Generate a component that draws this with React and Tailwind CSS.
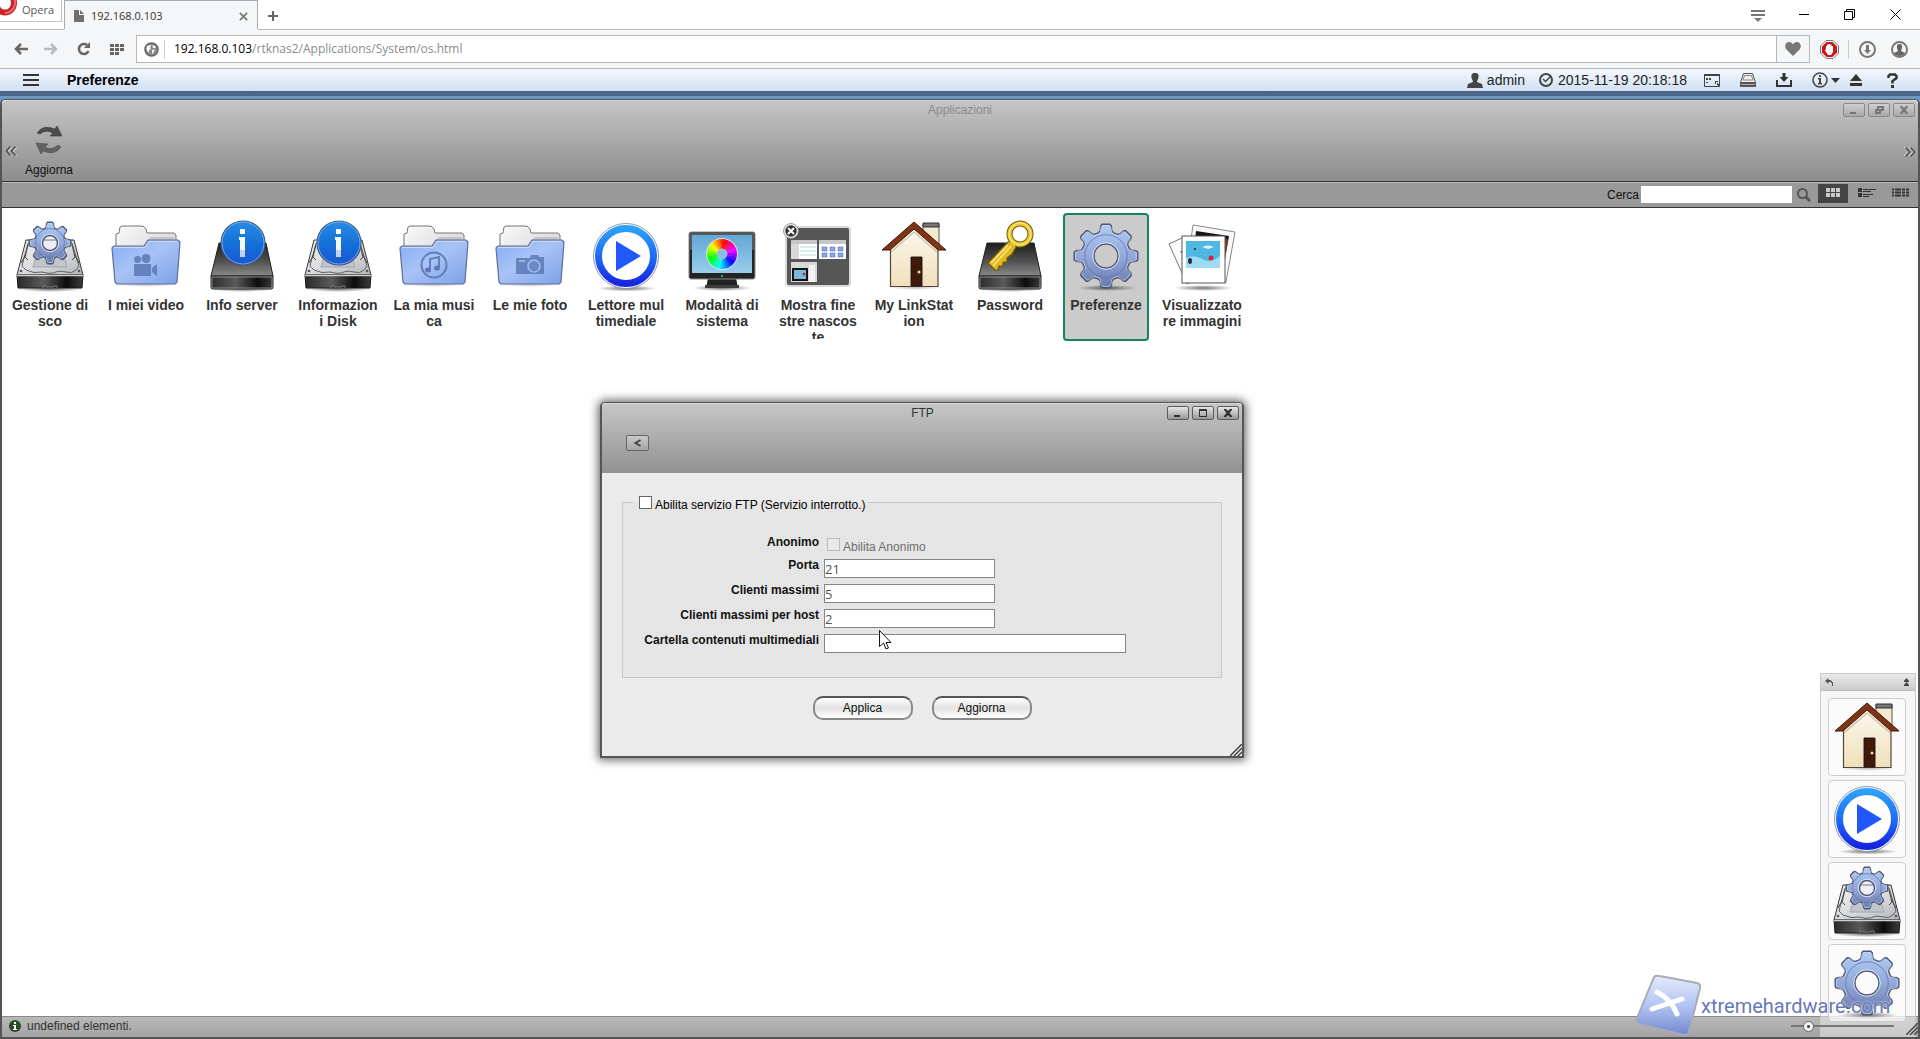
// Desktop view of the NAS web manager, shown inside a browser window

import React, { useState } from 'react';

/* ---------- shape helpers ---------- */

// Outline of a cog with eight teeth
const gearPath = (cx, cy, outer, root) => {
  const points = [];
  const add = (r, deg) => {
    const a = (deg * Math.PI) / 180;
    points.push(`${(cx + r * Math.cos(a)).toFixed(1)} ${(cy + r * Math.sin(a)).toFixed(1)}`);
  };
  for (let i = 0; i < 8; i++) {
    const base = i * 45;
    add(root, base - 17);
    add(root + 1.5, base - 13);
    add(outer - 1.5, base - 10);
    add(outer, base - 7);
    add(outer, base + 7);
    add(outer - 1.5, base + 10);
    add(root + 1.5, base + 13);
    add(root, base + 17);
  }
  return `M${points.join('L')}Z`;
};

const circlePath = (cx, cy, r) => `M${cx - r} ${cy}a${r} ${r} 0 1 0 ${2 * r} 0a${r} ${r} 0 1 0 ${-2 * r} 0Z`;

// One wedge of the colour wheel
const wedgePath = (cx, cy, r, from, to) => {
  const rad = (d) => (d * Math.PI) / 180;
  return `M${cx} ${cy}L${cx + r * Math.cos(rad(from))} ${cy + r * Math.sin(rad(from))}A${r} ${r} 0 0 1 ${cx + r * Math.cos(rad(to))} ${cy + r * Math.sin(rad(to))}Z`;
};

// Gradients shared by all application icons
const Gradients = () => (
  <svg width="0" height="0" className="absolute" aria-hidden="true">
    <defs>
      <linearGradient id="gear" x1="0" y1="0" x2="0" y2="1">
        <stop offset="0" stopColor="#b0cdf7" />
        <stop offset="0.5" stopColor="#94a9d9" />
        <stop offset="1" stopColor="#6878ab" />
      </linearGradient>
      <linearGradient id="folder" x1="0" y1="0" x2="1" y2="1">
        <stop offset="0" stopColor="#86abef" />
        <stop offset="0.45" stopColor="#a9c3f6" />
        <stop offset="1" stopColor="#7c9fe8" />
      </linearGradient>
      <linearGradient id="paper" x1="0" y1="0" x2="1" y2="1">
        <stop offset="0" stopColor="#fafafa" />
        <stop offset="1" stopColor="#c8c8c8" />
      </linearGradient>
      <linearGradient id="silver" x1="0" y1="0" x2="1" y2="1">
        <stop offset="0" stopColor="#f4f4f4" />
        <stop offset="0.6" stopColor="#d4d5d8" />
        <stop offset="1" stopColor="#b5b6ba" />
      </linearGradient>
      <linearGradient id="front" x1="0" y1="0" x2="1" y2="0">
        <stop offset="0" stopColor="#2a2a2a" />
        <stop offset="0.4" stopColor="#5a5a5a" />
        <stop offset="0.75" stopColor="#0c0c0c" />
        <stop offset="1" stopColor="#3c3c3c" />
      </linearGradient>
      <linearGradient id="black" x1="0" y1="0" x2="0" y2="1">
        <stop offset="0" stopColor="#1d1d1d" />
        <stop offset="0.55" stopColor="#515151" />
        <stop offset="1" stopColor="#8a8a8a" />
      </linearGradient>
      <linearGradient id="badge" x1="0" y1="0" x2="0" y2="1">
        <stop offset="0" stopColor="#2a8ce6" />
        <stop offset="0.5" stopColor="#1272d8" />
        <stop offset="1" stopColor="#1d55d3" />
      </linearGradient>
      <linearGradient id="ring" x1="0" y1="0" x2="0" y2="1">
        <stop offset="0" stopColor="#2ba0fb" />
        <stop offset="0.5" stopColor="#1f6cf7" />
        <stop offset="1" stopColor="#1525e0" />
      </linearGradient>
      <linearGradient id="wall" x1="0" y1="0" x2="0" y2="1">
        <stop offset="0" stopColor="#fdf9f0" />
        <stop offset="1" stopColor="#f0dfb9" />
      </linearGradient>
      <linearGradient id="screen" x1="0" y1="0" x2="0" y2="1">
        <stop offset="0" stopColor="#62a8d6" />
        <stop offset="1" stopColor="#9acdeb" />
      </linearGradient>
      <linearGradient id="logo" x1="0" y1="0" x2="0" y2="1">
        <stop offset="0" stopColor="#e4ebfa" />
        <stop offset="0.5" stopColor="#b3c4f5" />
        <stop offset="1" stopColor="#7288cd" />
      </linearGradient>
      <radialGradient id="shade">
        <stop offset="0" stopColor="#000" stopOpacity="0.55" />
        <stop offset="1" stopColor="#000" stopOpacity="0" />
      </radialGradient>
    </defs>
  </svg>
);

/* ---------- application icons, drawn on a 72 x 72 board ---------- */

const Board = ({ children }) => (
  <svg viewBox="0 0 72 72" className="block size-[72px] shrink-0" aria-hidden="true">{children}</svg>
);

const Gear = ({ cx, cy, outer, root, hole }) => (
  <g>
    <path d={gearPath(cx, cy, outer, root) + circlePath(cx, cy, hole)} fill="url(#gear)" fillRule="evenodd" stroke="#4d5670" strokeWidth="1.4" strokeLinejoin="round" />
    <path d={gearPath(cx, cy, outer - 1.5, root - 1.3)} fill="none" stroke="#c9dcfa" strokeWidth="0.8" opacity="0.8" />
    <circle cx={cx} cy={cy} r={hole + 1.3} fill="none" stroke="#d5e2fa" strokeWidth="1" />
    <circle cx={cx} cy={cy} r={(root + hole) / 2 + 3} fill="none" stroke="#6377ad" strokeWidth="0.8" />
  </g>
);

const SilverDisk = () => (
  <g>
    <ellipse cx="36" cy="69" rx="34" ry="3" fill="url(#shade)" />
    <path d="M12 20H60L69 55H3Z" fill="url(#silver)" stroke="#333" strokeWidth="1" strokeLinejoin="round" />
    <path d="M14 23H58L65 46L62 50Q58 54 52 52Q44 50 40 53Q34 54 28 52Q20 54 12 50L8 46Z" fill="none" stroke="#5d6066" strokeWidth="1" />
    <path d="M12 34l-5 9M60 34l5 9M14 25l-3 12 3 3M58 25l3 12-3 3" fill="none" stroke="#444" strokeWidth="1" />
    <path d="M23 33L19 47H53L49 33Z" fill="#c2c5cb" stroke="#999ca3" strokeWidth="0.8" />
    <path d="M3 55H69L68 68H4Z" fill="url(#front)" stroke="#1a1a1a" strokeWidth="1" strokeLinejoin="round" />
    <path d="M3 55.5H69" stroke="#cfcfcf" strokeWidth="1.5" />
    <circle cx="7" cy="51" r="1.3" fill="#555" />
    <circle cx="65" cy="51" r="1.3" fill="#555" />
    <path d="M29 68v-2h3v1h8v-1h3v2" fill="none" stroke="#777" />
  </g>
);

const BlackDisk = () => (
  <g>
    <ellipse cx="36" cy="69" rx="33" ry="3" fill="url(#shade)" />
    <path d="M13 23H60L67 56H5Z" fill="url(#black)" stroke="#222" strokeWidth="1" strokeLinejoin="round" />
    <path d="M5 56H67V67Q67 69 65 69H7Q5 69 5 67Z" fill="url(#front)" stroke="#222" strokeWidth="1" />
    <path d="M6 57H66V68H6Z" fill="none" stroke="#8b8b8b" strokeWidth="1" />
  </g>
);

const InfoBadge = () => (
  <g>
    <circle cx="37" cy="23" r="22" fill="url(#badge)" stroke="#3d5673" strokeWidth="1.2" />
    <circle cx="37" cy="23" r="21" fill="none" stroke="#7fb8ee" strokeWidth="0.8" />
    <path d="M34 9H39V14H34ZM33 17H39V37H34V20H33Z" fill="#f4f7fc" />
    <path d="M34 30H39V37H34Z" fill="#c4d2ee" />
  </g>
);

const DiskManagerIcon = () => (
  <Board>
    <SilverDisk />
    <circle cx="36" cy="23" r="8" fill="#eeeff2" />
    <path d="M30 20H42" stroke="#777" />
    <Gear cx={36} cy={23} outer={21} root={15.5} hole={7.5} />
  </Board>
);

const ServerInfoIcon = () => (
  <Board>
    <BlackDisk />
    <InfoBadge />
  </Board>
);

const DiskInfoIcon = () => (
  <Board>
    <SilverDisk />
    <InfoBadge />
  </Board>
);

const Folder = ({ children }) => (
  <Board>
    <ellipse cx="36" cy="64" rx="34" ry="3" fill="url(#shade)" opacity="0.5" />
    <path d="M6 60V14L9 13L10 7L12 6H33L36 9L37 13H64L66 15V60Z" fill="url(#paper)" stroke="#777" strokeWidth="1" strokeLinejoin="round" />
    <path d="M40 17H64V24H37Z" fill="#b9b9b9" opacity="0.7" />
    <path d="M2 28L4 26H34L38 20H68L70 22L67 62L65 64H7L5 62Z" fill="url(#folder)" stroke="#5d6f95" strokeWidth="1.2" strokeLinejoin="round" />
    <path d="M3.5 28L5 27.5H35L39 21.5H67" fill="none" stroke="#c9daf9" strokeWidth="1" />
    {children}
  </Board>
);

const VideoFolderIcon = () => (
  <Folder>
    <g fill="#5d78b4" opacity="0.85">
      <circle cx="27.5" cy="39.5" r="3.5" />
      <circle cx="36" cy="38.5" r="4.5" />
      <path d="M24 44H41V56H24ZM42 48L47 44V56L42 52Z" />
    </g>
  </Folder>
);

const MusicFolderIcon = () => (
  <Folder>
    <g fill="none" stroke="#5d78b4" strokeWidth="2" opacity="0.9">
      <circle cx="36" cy="45" r="12.5" />
      <path d="M32 49V39L41 37V47" />
    </g>
    <ellipse cx="30" cy="50" rx="3" ry="2.5" fill="#5d78b4" />
    <ellipse cx="39" cy="48" rx="3" ry="2.5" fill="#5d78b4" />
  </Folder>
);

const PhotoFolderIcon = () => (
  <Folder>
    <path d="M22 38H36L37 35H44L45 37H50V54H22Z" fill="#5d78b4" opacity="0.85" />
    <circle cx="40" cy="46" r="6" fill="#6d8ac8" stroke="#a4bdf0" strokeWidth="1.6" />
    <path d="M25 41H31" stroke="#a4bdf0" strokeWidth="1.6" />
  </Folder>
);

const PlayerIcon = () => (
  <Board>
    <ellipse cx="37" cy="68.5" rx="30" ry="3" fill="url(#shade)" />
    <circle cx="36" cy="36" r="32.5" fill="#fff" stroke="#8b97ab" strokeWidth="1" />
    <circle cx="36" cy="36" r="27.5" fill="#fff" stroke="url(#ring)" strokeWidth="7" />
    <path d="M26 21V51L51 36Z" fill="#2258fb" />
  </Board>
);

const MonitorIcon = () => (
  <Board>
    <ellipse cx="36" cy="68" rx="30" ry="3" fill="url(#shade)" />
    <path d="M22 58H50L52 68H20Z" fill="#222" />
    <path d="M19 65H53V68H19Z" fill="#3b3b3b" />
    <rect x="3" y="12" width="66" height="47" rx="2" fill="#242424" stroke="#8a8a8a" strokeWidth="1" />
    <path d="M4 13H68V30H4Z" fill="#8c8c8c" opacity="0.5" />
    <rect x="6" y="15" width="60" height="38" fill="url(#screen)" />
    <circle cx="36" cy="34" r="16" fill="#e8f0f4" opacity="0.8" />
    {Array.from({ length: 36 }, (_, i) => (
      <path key={i} d={wedgePath(36, 34, 15, i * 10, i * 10 + 11)} fill={`hsl(${(635 - i * 10) % 360} 100% 50%)`} />
    ))}
    <circle cx="36" cy="34" r="5" fill="#86bde0" stroke="#b4c7d2" />
    <circle cx="36" cy="56" r="1" fill="#31d583" />
  </Board>
);

const HiddenWindowsIcon = () => (
  <Board>
    <rect x="4" y="7" width="64" height="59" rx="3" fill="#565656" stroke="#d9d9d9" strokeWidth="2" />
    <rect x="9" y="20" width="26" height="19" fill="#fff" />
    <path d="M9 20H35V24H9Z" fill="#c6c6c6" />
    <path d="M9 24H17V39H9Z" fill="#d8d8d8" />
    <path d="M18 27H34M18 31H34M18 35H34" stroke="#b4dcd8" />
    <rect x="37" y="20" width="27" height="19" fill="#fff" />
    <path d="M37 20H64V24H37Z" fill="#c6c6c6" />
    <path d="M40 27H45V31H40ZM48 27H53V31H48ZM56 27H61V31H56ZM40 33H45V37H40ZM48 33H53V37H48ZM56 33H61V37H56Z" fill="#8aa6e2" stroke="#5d78c0" strokeWidth="0.6" />
    <rect x="9" y="42" width="26" height="20" fill="#d8d8d8" />
    <path d="M27 45H33V62H27Z" fill="#f2f2f2" />
    <rect x="10" y="48" width="16" height="13" fill="#111" />
    <rect x="12" y="50" width="12" height="9" fill="#7ab8dc" />
    <circle cx="22" cy="54" r="1.5" fill="#b3314d" />
    <circle cx="9" cy="11" r="6.5" fill="#333" stroke="#eee" strokeWidth="1.5" />
    <circle cx="9" cy="11" r="7.5" fill="none" stroke="#888" strokeWidth="0.8" />
    <path d="M6 8L12 14M12 8L6 14" stroke="#fff" strokeWidth="2" />
  </Board>
);

const HouseIcon = () => (
  <Board>
    <ellipse cx="37" cy="67" rx="28" ry="3" fill="url(#shade)" opacity="0.5" />
    <path d="M45 4H61V28H45Z" fill="#f5ead0" stroke="#555" strokeWidth="1" />
    <path d="M45 3H61V7H45Z" fill="#777" stroke="#333" strokeWidth="1" />
    <path d="M12.5 27L36 7L60 27V66.5H12.5Z" fill="url(#wall)" stroke="#51463a" strokeWidth="1.2" />
    <path d="M32 36H45V66H32Z" fill="#fffdf7" />
    <path d="M33 37H44V66H33Z" fill="#3f1a0b" stroke="#22100a" strokeWidth="1" />
    <circle cx="41" cy="52" r="1.5" fill="#f3d88b" />
    <path d="M36 2L68 30H60L36 9L12 30H4Z" fill="#7f3416" stroke="#3c1a0d" strokeWidth="1" strokeLinejoin="round" />
    <path d="M13 32L36 12L59 32" fill="none" stroke="#a69675" strokeWidth="1.5" opacity="0.5" />
  </Board>
);

const KeyIcon = () => (
  <Board>
    <BlackDisk />
    <circle cx="46" cy="14" r="10.5" fill="none" stroke="#6f5a10" strokeWidth="6" />
    <path d="M42 21L34 22L14 43L21 50L24 50L25 46H29L29 42L33 42L33 38L38 34L42 27Z" fill="#e2b91f" stroke="#6f5a10" strokeWidth="1.2" strokeLinejoin="round" />
    <path d="M37 26L19 46M34 25L17 43" stroke="#fbe77a" strokeWidth="1.5" />
    <circle cx="46" cy="14" r="10.5" fill="none" stroke="#f0cc35" strokeWidth="4" />
    <circle cx="46" cy="14" r="11" fill="none" stroke="#fbe98b" strokeWidth="1" />
  </Board>
);

const PreferencesIcon = () => (
  <Board>
    <ellipse cx="37" cy="68" rx="30" ry="3" fill="url(#shade)" />
    <Gear cx={36} cy={36} outer={32} root={24.5} hole={12} />
  </Board>
);

const ImageViewerIcon = () => (
  <Board>
    <ellipse cx="37" cy="68" rx="30" ry="3" fill="url(#shade)" />
    <path d="M3 24L20 16L32 58L21 64Z" fill="#fafafa" stroke="#777" strokeWidth="1" />
    <path d="M27 5L69 12L60 62L20 56Z" fill="#fafafa" stroke="#888" strokeWidth="1" />
    <path d="M30 11L63 16L57 50L26 44Z" fill="#1a1412" />
    <path d="M59 18L62 20L58 45L56 32Z" fill="#8b3718" />
    <path d="M14 31L17 35L16 31Z" fill="#3c9c3c" />
    <rect x="16" y="16" width="43" height="47" fill="#fff" stroke="#555" strokeWidth="1" />
    <rect x="20" y="21" width="34" height="27" fill="#4fb8e2" />
    <path d="M20 38Q28 34 36 39T54 36V48H20Z" fill="#9ddcf0" />
    <path d="M36 27Q42 24 48 27L42 29Z" fill="#dff2fa" />
    <circle cx="45" cy="38" r="2.5" fill="#d3263c" />
    <ellipse cx="24" cy="41" rx="2" ry="3" fill="#3a2443" />
    <circle cx="29" cy="29" r="1" fill="#222" />
  </Board>
);

/* ---------- data ---------- */

const apps = [
  { lines: ['Gestione di', 'sco'], Icon: DiskManagerIcon },
  { lines: ['I miei video'], Icon: VideoFolderIcon },
  { lines: ['Info server'], Icon: ServerInfoIcon },
  { lines: ['Informazion', 'i Disk'], Icon: DiskInfoIcon },
  { lines: ['La mia musi', 'ca'], Icon: MusicFolderIcon },
  { lines: ['Le mie foto'], Icon: PhotoFolderIcon },
  { lines: ['Lettore mul', 'timediale'], Icon: PlayerIcon },
  { lines: ['Modalità di', 'sistema'], Icon: MonitorIcon },
  { lines: ['Mostra fine', 'stre nascos', 'te'], Icon: HiddenWindowsIcon },
  { lines: ['My LinkStat', 'ion'], Icon: HouseIcon },
  { lines: ['Password'], Icon: KeyIcon },
  { lines: ['Preferenze'], Icon: PreferencesIcon, selected: true },
  { lines: ['Visualizzato', 're immagini'], Icon: ImageViewerIcon }
];

const dockItems = [
  { label: 'My LinkStation', Icon: HouseIcon },
  { label: 'Lettore multimediale', Icon: PlayerIcon },
  { label: 'Gestione disco', Icon: DiskManagerIcon },
  { label: 'Preferenze', Icon: PreferencesIcon }
];

const textFields = [
  { id: 'port', label: 'Porta', value: '21', width: 'w-[171px]' },
  { id: 'clients', label: 'Clienti massimi', value: '5', width: 'w-[171px]' },
  { id: 'per-host', label: 'Clienti massimi per host', value: '2', width: 'w-[171px]' },
  { id: 'media-folder', label: 'Cartella contenuti multimediali', value: '', width: 'w-[302px]' }
];

/* ---------- browser chrome ---------- */

const BrowserTabs = () => (
  <div className="flex h-[30px] items-start border-b border-[#b9bcbd] bg-white">
    <button type="button" className="flex h-[22px] w-[62px] items-center border-r border-b border-[#c4c4c4] text-[11px] text-[#555]">
      <svg width="18" height="18" viewBox="0 0 18 18" className="mr-1 shrink-0 self-start" aria-hidden="true">
        <ellipse cx="5" cy="3" rx="9" ry="9.5" fill="none" stroke="#c9252b" strokeWidth="6" />
        <path d="M15 0A10 11 0 0 1 5 13" fill="none" stroke="#f0686b" strokeWidth="2" />
      </svg>
      Opera
    </button>
    <div className="ml-[2px] flex h-[29px] w-[194px] shrink-0 items-center border-x border-t border-[#a9acad] bg-[#f4f6f7] px-[9px] pt-[2px] text-[11px] text-[#333] shadow-[0_1px_0_#f4f6f7]">
      <svg width="10" height="12" viewBox="0 0 10 12" className="mr-[7px]" aria-hidden="true">
        <path d="M0 0H5V5H10V12H0ZM6 0L10 4H6Z" fill="#6f6f6f" />
      </svg>
      <span className="flex-1">192.168.0.103</span>
      <button type="button" aria-label="Chiudi scheda">
        <svg width="9" height="9" viewBox="0 0 10 10" aria-hidden="true">
          <path d="M1 1L9 9M9 1L1 9" stroke="#777" strokeWidth="2" />
        </svg>
      </button>
    </div>
    <button type="button" aria-label="Nuova scheda" className="mt-[11px] ml-[10px]">
      <svg width="10" height="10" viewBox="0 0 10 10" className="block" aria-hidden="true">
        <path d="M5 0V10M0 5H10" stroke="#666" strokeWidth="2" />
      </svg>
    </button>
    <div className="ml-auto flex h-[29px] items-center pr-[19px]">
      <button type="button" aria-label="Schede" className="mr-[34px]">
        <svg width="14" height="12" viewBox="0 0 14 12" className="mt-[2px] block" aria-hidden="true">
          <path d="M0 1H14M0 5H14" stroke="#777" strokeWidth="2" />
          <path d="M3 8H11L7 12Z" fill="#777" />
        </svg>
      </button>
      <button type="button" aria-label="Riduci" className="mr-[35px]">
        <svg width="10" height="11" viewBox="0 0 10 11" className="block" aria-hidden="true"><path d="M0 5.5H10" stroke="#000" /></svg>
      </button>
      <button type="button" aria-label="Ripristina" className="mr-[35px]">
        <svg width="11" height="11" viewBox="0 0 11 11" className="block" aria-hidden="true">
          <path d="M0.5 2.5H8.5V10.5H0.5ZM2.5 2.5V0.5H10.5V8.5H8.5" fill="none" stroke="#000" />
        </svg>
      </button>
      <button type="button" aria-label="Chiudi">
        <svg width="11" height="11" viewBox="0 0 11 11" className="block" aria-hidden="true"><path d="M0.5 0.5L10.5 10.5M10.5 0.5L0.5 10.5" stroke="#000" /></svg>
      </button>
    </div>
  </div>
);

const AddressBar = () => (
  <div className="flex h-[39px] items-center border-b border-[#b5b8ba] bg-[#f4f6f7] pr-3 pl-[14px]">
    <button type="button" aria-label="Indietro" className="mr-4">
      <svg width="14" height="12" viewBox="0 0 14 12" className="block" aria-hidden="true"><path d="M14 6H2M7 1L2 6L7 11" fill="none" stroke="#666" strokeWidth="2.5" /></svg>
    </button>
    <button type="button" aria-label="Avanti" className="mr-[19px]">
      <svg width="14" height="12" viewBox="0 0 14 12" className="block" aria-hidden="true"><path d="M0 6H12M7 1L12 6L7 11" fill="none" stroke="#b9bbbc" strokeWidth="2.5" /></svg>
    </button>
    <button type="button" aria-label="Ricarica" className="mr-[19px]">
      <svg width="14" height="14" viewBox="0 0 14 14" className="block" aria-hidden="true">
        <path d="M10 3A5 5 0 1 0 11.5 9" fill="none" stroke="#666" strokeWidth="2.5" />
        <path d="M13 0V6H7Z" fill="#666" />
      </svg>
    </button>
    <button type="button" aria-label="Accesso rapido" className="mr-3">
      <svg width="14" height="11" viewBox="0 0 14 11" className="block" aria-hidden="true">
        <path d="M0 0H4V3H0ZM5 0H9V3H5ZM10 0H14V3H10ZM0 4H4V7H0ZM5 4H9V7H5ZM10 4H14V7H10ZM0 8H4V11H0ZM5 8H9V11H5Z" fill="#666" />
      </svg>
    </button>
    <div className="flex h-7 flex-1 items-center border border-[#b5b8ba] bg-white">
      <svg width="15" height="15" viewBox="0 0 15 15" className="ml-[7px]" aria-hidden="true">
        <circle cx="7.5" cy="7.5" r="6.5" fill="#8a8a8a" stroke="#666" strokeWidth="1.5" />
        <path d="M3 4L7 3L6 6L7 7L5 8L5 11L3.5 9L2.5 7ZM8.5 3L12 4.5L11 6L9 6ZM8 8L11 7.5L10 9L9 12L8 11Z" fill="#fff" />
      </svg>
      <span className="ml-[5px] h-[19px] w-px bg-[#ccc]" />
      <p className="ml-[9px] flex-1 text-[12px] text-black">
        192.168.0.103<span className="text-[#8c8c8c]">/rtknas2/Applications/System/os.html</span>
      </p>
      <button type="button" aria-label="Preferiti" className="flex h-full w-[33px] items-center justify-center border-l border-[#b5b8ba] bg-[#f4f6f7]">
        <svg width="16" height="14" viewBox="0 0 16 14" aria-hidden="true"><path d="M8 14L1 7C-1 4 1 0 4 0C6 0 7.5 1 8 2.5C8.5 1 10 0 12 0C15 0 17 4 15 7Z" fill="#777" /></svg>
      </button>
    </div>
    <button type="button" aria-label="Blocco pubblicità" className="ml-[10px]">
      <svg width="19" height="19" viewBox="0 0 19 19" className="block" aria-hidden="true">
        <path d="M6 0.5H13L18.5 6V13L13 18.5H6L0.5 13V6Z" fill="#fff" stroke="#777" />
        <path d="M6.5 2H12.5L17 6.5V12.5L12.5 17H6.5L2 12.5V6.5Z" fill="#cc1517" />
        <path d="M6 9V6H7V9V4.5H8.5V8V4H10V8V4.5H11.5V9V6H13V12L11 15H8L5 10.5Z" fill="#fff" />
      </svg>
    </button>
    <span className="ml-[9px] h-[19px] w-px bg-[#ccc]" />
    <button type="button" aria-label="Download" className="ml-[10px]">
      <svg width="17" height="17" viewBox="0 0 17 17" className="block" aria-hidden="true">
        <circle cx="8.5" cy="8.5" r="7.5" fill="none" stroke="#777" strokeWidth="2" />
        <path d="M7 4H10V9H12L8.5 13L5 9H7Z" fill="#777" />
      </svg>
    </button>
    <button type="button" aria-label="Profilo" className="ml-[15px]">
      <svg width="17" height="17" viewBox="0 0 17 17" className="block" aria-hidden="true">
        <circle cx="8.5" cy="8.5" r="7.5" fill="none" stroke="#777" strokeWidth="2" />
        <path d="M8.5 3C11 3 11.5 5 11 7C10.5 9 10 9 10 10L14 12C12 16 5 16 3 12L7 10C7 9 6.5 9 6 7C5.5 5 6 3 8.5 3Z" fill="#666" />
      </svg>
    </button>
  </div>
);

/* ---------- system bar ---------- */

const SystemBar = () => (
  <header className="flex h-[22px] shrink-0 items-center bg-linear-to-b from-[#f5f9fd] to-[#cfdff2] pr-[22px] pl-[23px] text-[14px] text-[#222]">
    <button type="button" aria-label="Menu">
      <svg width="16" height="12" viewBox="0 0 16 12" className="block" aria-hidden="true"><path d="M0 1H16M0 6H16M0 11H16" stroke="#333" strokeWidth="2" /></svg>
    </button>
    <h1 className="ml-7 text-[14px] font-bold text-black">Preferenze</h1>
    <div className="ml-auto flex items-center">
      <svg width="16" height="15" viewBox="0 0 16 15" aria-hidden="true"><path d="M8 0C11 0 12 2 11.5 4.5C11 7 10 7.5 10 9L15 11L16 15H0L1 11L6 9C6 7.5 5 7 4.5 4.5C4 2 5 0 8 0Z" fill="#444" /></svg>
      <span className="ml-1">admin</span>
      <svg width="16" height="16" viewBox="0 0 16 16" className="ml-[13px]" aria-hidden="true">
        <circle cx="8" cy="8" r="6" fill="none" stroke="#444" strokeWidth="2" />
        <path d="M5 7L7.5 9.5L12 5" fill="none" stroke="#444" strokeWidth="1.5" />
      </svg>
      <time className="ml-1 w-[146px]">2015-11-19 20:18:18</time>
      <div className="flex items-center gap-5">
        <button type="button" aria-label="Finestre">
          <svg width="16" height="14" viewBox="0 0 16 14" className="block" aria-hidden="true">
            <path d="M0.5 1.5H15.5V13.5H0.5Z" fill="none" stroke="#444" />
            <path d="M0 1H16V3H0Z" fill="#444" />
            <path d="M2 5H4V7H2ZM5 5H7V7H5ZM2 9H4V10H2ZM11 8H14V9H12V11H11ZM13 10H14V11H15V13H14V12H13Z" fill="#444" />
          </svg>
        </button>
        <button type="button" aria-label="Disco">
          <svg width="16" height="14" viewBox="0 0 16 14" className="block" aria-hidden="true">
            <path d="M3.5 0.5H12.5L15.5 9.5H0.5Z" fill="#eee" stroke="#555" />
            <path d="M4.5 2.5H11.5L13 7H3Z" fill="none" stroke="#888" />
            <path d="M0 9.5H16V14H0Z" fill="#555" />
            <path d="M1 11.5H15" stroke="#aaa" />
          </svg>
        </button>
        <button type="button" aria-label="Scarica">
          <svg width="16" height="14" viewBox="0 0 16 14" className="block" aria-hidden="true">
            <path d="M6.5 0H9.5V4H12.5L8 9L3.5 4H6.5Z" fill="#333" />
            <path d="M1 7V13H15V7" fill="none" stroke="#333" strokeWidth="2" />
          </svg>
        </button>
        <button type="button" aria-label="Informazioni" className="flex items-center gap-[3px]">
          <svg width="16" height="16" viewBox="0 0 16 16" aria-hidden="true">
            <circle cx="8" cy="8" r="7" fill="none" stroke="#444" strokeWidth="1.5" />
            <path d="M7 3H9V5H7ZM6 6H9V11H10V12.5H6V11H7V7.5H6Z" fill="#444" />
          </svg>
          <svg width="9" height="6" viewBox="0 0 9 6" aria-hidden="true"><path d="M0 1H9L4.5 6Z" fill="#333" /></svg>
        </button>
      </div>
      <button type="button" aria-label="Espelli" className="ml-[10px]">
        <svg width="12" height="12" viewBox="0 0 12 12" className="block" aria-hidden="true"><path d="M6 0L12 7H0ZM0 9H12V12H0Z" fill="#333" /></svg>
      </button>
      <button type="button" aria-label="Aiuto" className="ml-[25px]">
        <svg width="11" height="15" viewBox="0 0 11 15" className="block" aria-hidden="true">
          <path d="M1.5 5V3L3 1.5H8L9.5 3V5L5.5 8V10.5" fill="none" stroke="#333" strokeWidth="2.5" />
          <path d="M4 12H7V15H4Z" fill="#333" />
        </svg>
      </button>
    </div>
  </header>
);

/* ---------- window parts ---------- */

const windowButtonPaths = {
  minimize: 'M6 8H12V10H6Z',
  restore: 'M8 2H15V7H12V10H6V5H8ZM10 4V5H13V4ZM8 7V8H10V7Z',
  maximize: 'M6 2H14V10H6ZM7 4V9H13V4Z',
  close: 'M6 2H8L10 4L12 2H14V3L11.5 6L14 9V10H12L10 8L8 10H6V9L8.5 6L6 3Z'
};

const WindowButton = ({ kind, label, muted }) => (
  <button
    type="button"
    aria-label={label}
    className={`h-[14px] w-[22px] rounded-[2px] border bg-linear-to-b ${muted
      ? 'border-[#8a8a8a] from-[#d0d0d0] to-[#a9a9a9] text-[#777]'
      : 'border-[#5c5c5c] from-[#e6e6e6] to-[#989898] text-[#333]'
    }`}
  >
    <svg width="20" height="12" viewBox="0 0 20 12" className="block" aria-hidden="true">
      <path d={windowButtonPaths[kind]} fill="currentColor" fillRule="evenodd" />
    </svg>
  </button>
);

const Chevrons = ({ flip }) => (
  <svg width="12" height="10" viewBox="0 0 12 10" className={flip ? 'block rotate-180' : 'block'} aria-hidden="true">
    <path d="M6.5 1L2.5 5.5L6.5 10M11.5 1L7.5 5.5L11.5 10" fill="none" stroke="#ddd" strokeWidth="1.5" />
    <path d="M5.5 0.5L1.5 5L5.5 9.5M10.5 0.5L6.5 5L10.5 9.5" fill="none" stroke="#4a4a4a" strokeWidth="1.5" />
  </svg>
);

const ResizeGrip = () => (
  <svg width="12" height="12" viewBox="0 0 12 12" className="block" aria-hidden="true">
    <path d="M0 12L12 0M4 12L12 4M8 12L12 8" stroke="#444" strokeWidth="1.5" />
  </svg>
);

const AppWindowHeader = () => (
  <div className="flex h-[81px] shrink-0 flex-col rounded-t-[4px] border-t border-[#d8d8d8] bg-linear-to-b from-[#c5c5c5] to-[#8d8d8d]">
    <div className="grid grid-cols-[1fr_auto_1fr] items-center pt-[2px] pr-[3px] pl-[3px]">
      <span />
      <h2 className="text-[12px] leading-[14px] text-[#8c8c8c]">Applicazioni</h2>
      <div className="flex justify-end gap-[3px]">
        <WindowButton kind="minimize" label="Riduci finestra" muted />
        <WindowButton kind="restore" label="Ripristina finestra" muted />
        <WindowButton kind="close" label="Chiudi finestra" muted />
      </div>
    </div>
    <div className="flex flex-1 items-center justify-between pr-[2px] pl-[3px]">
      <div className="flex items-center pt-1">
        <button type="button" aria-label="Scorri a sinistra"><Chevrons /></button>
        <button type="button" className="ml-2 flex flex-col items-center text-[12px] leading-[14px] text-[#111]">
          <svg width="28" height="30" viewBox="0 0 28 30" className="mb-2 block" aria-hidden="true">
            <path d="M2 8Q8 -1 20 4L22 1L27 11L15 11L18 8Q10 4 5 9Z" fill="#4c4c4c" stroke="#3d3d3d" strokeWidth="0.6" />
            <path d="M26 22Q20 31 8 26L6 29L1 18L13 19L10 22Q17 26 23 20Z" fill="#626262" stroke="#4d4d4d" strokeWidth="0.6" />
          </svg>
          Aggiorna
        </button>
      </div>
      <button type="button" aria-label="Scorri a destra" className="mt-[5px]"><Chevrons flip /></button>
    </div>
  </div>
);

const SearchBar = () => (
  <div className="flex h-[27px] shrink-0 items-center justify-end border-y border-t-[#333] border-b-[#333] bg-[#999] pr-2 text-[12px] text-[#111] shadow-[inset_0_1px_0_#bbb]">
    <label htmlFor="search">Cerca</label>
    <input id="search" type="text" className="ml-[2px] h-[17px] w-[151px] bg-white px-1 text-[12px] outline-none" />
    <button type="button" aria-label="Avvia ricerca" className="ml-[5px]">
      <svg width="14" height="14" viewBox="0 0 14 14" className="block" aria-hidden="true">
        <circle cx="5.5" cy="5.5" r="4.5" fill="none" stroke="#555" strokeWidth="2" />
        <path d="M9 9L13 13" stroke="#555" strokeWidth="3" />
      </svg>
    </button>
    <button type="button" aria-label="Icone" className="mb-[2px] ml-[7px] flex h-[19px] w-[30px] items-center justify-center bg-[#444]">
      <svg width="14" height="9" viewBox="0 0 14 9" className="mb-[2px]" aria-hidden="true"><path d="M0 0H4V4H0ZM5 0H9V4H5ZM10 0H14V4H10ZM0 5H4V9H0ZM5 5H9V9H5ZM10 5H14V9H10Z" fill="#c9c9c9" /></svg>
    </button>
    <button type="button" aria-label="Elenco" className="ml-[10px]">
      <svg width="18" height="10" viewBox="0 0 18 10" className="mb-1 block" aria-hidden="true"><path d="M0 0H4V4H0ZM0 5H4V9H0ZM5 1H18V2H5ZM5 3H13V4H5ZM5 6H15V7H5ZM5 8H11V9H5Z" fill="#333" /></svg>
    </button>
    <button type="button" aria-label="Elenco compatto" className="ml-4">
      <svg width="18" height="10" viewBox="0 0 18 10" className="mb-1 block" aria-hidden="true"><path d="M0 1.5H18M0 4.5H18M0 7.5H18" stroke="#333" strokeWidth="2" strokeDasharray="2 1 6 1 3 1 3 1" /></svg>
    </button>
  </div>
);

const AppTile = ({ lines, Icon, selected }) => (
  <button
    type="button"
    className={`flex h-32 w-[86px] flex-col items-center overflow-hidden rounded-[4px] border-2 pt-[5px] ${selected ? 'border-[#17865c] bg-[#cbcbcb]' : 'border-transparent'}`}
  >
    <Icon />
    <span className="mt-[5px] h-[42px] overflow-hidden text-[14px] leading-4 font-bold whitespace-nowrap text-[#333]">
      {lines.map((line) => (
        <span key={line} className="block">{line}</span>
      ))}
    </span>
  </button>
);

const Dock = () => (
  <aside className="absolute right-[2px] bottom-0 flex h-[364px] w-24 flex-col border border-[#c9c9c9] bg-[#eee]/50">
    <div className="flex h-[17px] shrink-0 items-center justify-between border-b border-[#bbb] bg-linear-to-b from-[#eaeaea] to-[#cbcbcb] px-1">
      <button type="button" aria-label="Annulla">
        <svg width="9" height="8" viewBox="0 0 9 8" className="block" aria-hidden="true"><path d="M3.5 0V6L0 3ZM3 2H6V3H7V4H8V8H7V5H6V4H3Z" fill="#555" /></svg>
      </button>
      <button type="button" aria-label="Comprimi">
        <svg width="7" height="8" viewBox="0 0 7 8" className="mr-px block" aria-hidden="true"><path d="M3.5 0L6 3H1ZM3.5 4L6 7H1ZM1 3H6V4H1ZM1 7H6V8H1Z" fill="#444" /></svg>
      </button>
    </div>
    <div className="flex h-[331px] flex-col gap-1 overflow-hidden pt-[7px] pl-[7px]">
      {dockItems.map(({ label, Icon }) => (
        <button key={label} type="button" aria-label={label} className="flex size-[78px] shrink-0 justify-center rounded-[4px] border border-[#ccc] bg-white/60 pt-[2px]">
          <Icon />
        </button>
      ))}
    </div>
  </aside>
);

const StatusBar = () => {
  const [zoom, setZoom] = useState(13);
  return (
    <footer className="flex h-[21px] shrink-0 items-center border-t border-[#888] bg-linear-to-b from-[#b9b9b9] to-[#a3a3a3] pb-[2px] pl-[7px] text-[12px] text-[#333]">
      <svg width="12" height="12" viewBox="0 0 12 12" aria-hidden="true">
        <circle cx="6" cy="6" r="6" fill="#2d4a2d" />
        <path d="M5 2H7V4H5ZM4 5H7V9H8V10H4V9H5V6H4Z" fill="#fff" />
      </svg>
      <span className="ml-[6px]">undefined elementi.</span>
      <input
        type="range"
        aria-label="Dimensione icone"
        min="0"
        max="100"
        value={zoom}
        onChange={(e) => setZoom(Number(e.target.value))}
        className="relative z-10 mr-3 ml-auto h-[11px] w-[103px] appearance-none bg-[linear-gradient(#777,#777)] bg-[length:100%_2px] bg-center bg-no-repeat [&::-webkit-slider-thumb]:size-[11px] [&::-webkit-slider-thumb]:appearance-none [&::-webkit-slider-thumb]:rounded-full [&::-webkit-slider-thumb]:border [&::-webkit-slider-thumb]:border-[#666] [&::-webkit-slider-thumb]:bg-[radial-gradient(#444_0_1px,#f4f4f4_2px)]"
      />
      <span className="relative z-10 self-end"><ResizeGrip /></span>
    </footer>
  );
};

/* ---------- FTP dialog ---------- */

const FtpDialog = () => {
  const [enabled, setEnabled] = useState(false);

  return (
    <section
      role="dialog"
      aria-labelledby="ftp-title"
      className="absolute top-[402px] left-[600px] z-20 flex h-[356px] w-[644px] flex-col rounded-t-[5px] border-2 border-t border-[#555] bg-[#ebebeb] text-[12px] leading-[14px] text-black shadow-[0_0_10px_2px_rgba(0,0,0,0.6)]"
    >
      <div className="h-[70px] shrink-0 rounded-t-[3px] border-t border-[#d8d8d8] bg-linear-to-b from-[#c6c6c6] to-[#929292]">
        <div className="grid grid-cols-[1fr_auto_1fr] items-center pt-[2px] pr-[3px] pl-1">
          <span />
          <h2 id="ftp-title" className="text-[#333]">FTP</h2>
          <div className="flex justify-end gap-[3px]">
            <WindowButton kind="minimize" label="Riduci" />
            <WindowButton kind="maximize" label="Ingrandisci" />
            <WindowButton kind="close" label="Chiudi" />
          </div>
        </div>
        <button
          type="button"
          aria-label="Indietro"
          className="mt-[15px] ml-6 flex h-4 w-[23px] items-center justify-center rounded-[2px] border border-[#666] bg-linear-to-b from-[#c9c9c9] to-[#a6a6a6]"
        >
          <svg width="7" height="8" viewBox="0 0 7 8" aria-hidden="true"><path d="M6.5 1L1.5 4L6.5 7" fill="none" stroke="#444" strokeWidth="1.8" /></svg>
        </button>
      </div>

      <form className="flex-1 px-5 pt-[22px]" onSubmit={(e) => e.preventDefault()}>
        <fieldset className="h-[183px] border border-[#c8c8c8] bg-[#e5e5e5] pl-[10px]">
          <legend className="pr-[2px] pl-[6px]">
            <label className="flex h-[14px] items-start gap-[3px]">
              <input
                type="checkbox"
                checked={enabled}
                onChange={(e) => setEnabled(e.target.checked)}
                className="mt-px size-[13px] appearance-none border border-[#666] bg-white"
              />
              <span className="pt-[3px]">Abilita servizio FTP (Servizio interrotto.)</span>
            </label>
          </legend>

          <div className="mt-[26px] flex h-[23px] items-start">
            <span className="w-[186px] text-right font-bold text-[#111]">Anonimo</span>
            <label className="mt-[3px] ml-2 flex items-start gap-[3px] text-[#707070]">
              <input type="checkbox" disabled className="size-[13px] appearance-none border border-[#bbb] bg-[#e9e9e9]" />
              <span className="pt-[2px]">Abilita Anonimo</span>
            </label>
          </div>
          <div className="flex flex-col gap-[5px]">
            {textFields.map((field) => (
              <div key={field.id} className="flex items-start">
                <label htmlFor={field.id} className="w-[186px] text-right font-bold whitespace-nowrap text-[#111]">{field.label}</label>
                <input
                  id={field.id}
                  type="text"
                  disabled={!enabled}
                  defaultValue={field.value}
                  className={`mt-px ml-[5px] h-[19px] border border-[#858585] bg-white font-['Open_Sans',sans-serif] text-[13px] text-[#545454] ${field.width}`}
                />
              </div>
            ))}
          </div>
        </fieldset>

        <div className="mt-[18px] flex justify-center gap-[19px]">
          {['Applica', 'Aggiorna'].map((label) => (
            <button
              key={label}
              type="button"
              className="h-6 w-[100px] rounded-[10px] border-2 border-[#888] border-t-[#555] bg-linear-to-b from-white via-[#e2e2e2] to-white text-[12px] text-[#111]"
            >
              {label}
            </button>
          ))}
        </div>
      </form>
      <span className="absolute right-0 bottom-0"><ResizeGrip /></span>
    </section>
  );
};

const MousePointer = () => (
  <svg width="13" height="20" viewBox="0 0 13 20" className="absolute top-[630px] left-[879px] z-30" aria-hidden="true">
    <path d="M0.5 0.5V16.5L4.5 13L7 19L9.5 18L7 12.5H12Z" fill="#fff" stroke="#111" strokeWidth="1" />
  </svg>
);

const Watermark = () => (
  <div className="pointer-events-none absolute right-[37px] bottom-[2px] z-30 flex items-center">
    <svg width="66" height="62" viewBox="0 0 66 62" aria-hidden="true">
      <path d="M19 2Q21 0 25 1L62 8Q66 9 65 13L54 57Q53 61 49 60L4 49Q0 48 2 43Z" fill="url(#logo)" stroke="#a9acb8" strokeWidth="2" />
      <path d="M22 17Q36 24 42 39M47 24L17 34" stroke="#fff" strokeWidth="5" strokeLinecap="round" fill="none" />
    </svg>
    <span className="w-[182px] font-['Roboto',sans-serif] text-[20px] text-[#6678b8] [text-shadow:0_0_2px_#fff]">xtremehardware.com</span>
  </div>
);

const App = () => (
  <div className="relative flex h-screen flex-col overflow-hidden bg-[#6b96c6] font-['Liberation_Sans',Arial,sans-serif]">
    <Gradients />
    <div className="shrink-0 font-['Open_Sans',sans-serif]">
      <BrowserTabs />
      <AddressBar />
    </div>
    <SystemBar />
    <div className="h-[5px] shrink-0 bg-[#4a6789]" />

    <main className="relative mt-[3px] flex min-h-0 flex-1 flex-col rounded-t-[5px] border-2 border-t border-[#555] bg-white">
      <AppWindowHeader />
      <SearchBar />
      <div className="flex flex-1 flex-wrap content-start gap-x-[10px] px-[5px] pt-[5px]">
        {apps.map((app) => (
          <AppTile key={app.lines[0]} {...app} />
        ))}
      </div>
      <StatusBar />
      <Dock />
    </main>

    <FtpDialog />
    <Watermark />
    <MousePointer />
  </div>
);

export default App;
